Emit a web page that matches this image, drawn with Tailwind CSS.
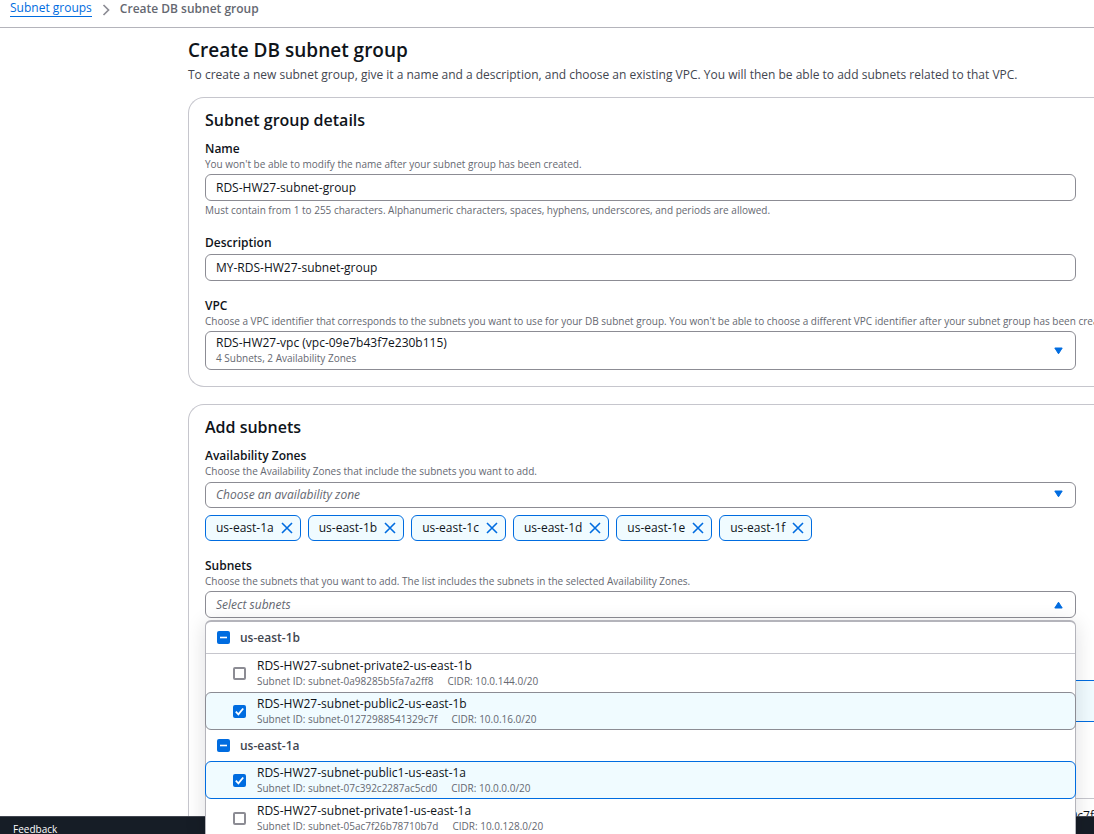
<!DOCTYPE html>
<html lang="en">
<head>
<meta charset="utf-8">
<meta name="viewport" content="width=device-width, initial-scale=1">
<title>Create DB subnet group</title>
<script src="https://cdn.jsdelivr.net/npm/@tailwindcss/browser@4"></script>
</head>
<body class="bg-white font-['Open_Sans','Noto_Sans',sans-serif] text-xs text-[#0f141a]">
<div class="relative h-screen overflow-hidden">

  <nav aria-label="Breadcrumbs" class="flex h-7 items-start gap-2 border-b border-[#b4b4bb] pl-[10px] leading-[18px]">
    <a href="#" class="leading-4 text-[#006ce0] border-b border-[#006ce0]">Subnet groups</a>
    <svg class="mt-1 size-3 text-[#8c8c94]" viewBox="0 0 12 12" fill="none" stroke="currentColor" stroke-width="1.7" aria-hidden="true"><path d="M3.5 1 8.5 6l-5 5"/></svg>
    <span class="font-semibold text-[#656871]">Create DB subnet group</span>
  </nav>

  <main class="pl-[188px] pt-[10px]">
    <h1 class="text-[19px] leading-6 font-semibold">Create DB subnet group</h1>
    <p class="mt-1 leading-[18px] text-[#424650]">To create a new subnet group, give it a name and a description, and choose an existing VPC. You will then be able to add subnets related to that VPC.</p>

    <section class="mt-[13px] rounded-l-2xl border border-r-0 border-[#c6c6cd] pt-3 pr-[18px] pb-4 pl-4">
      <h2 class="text-base leading-5 font-semibold">Subnet group details</h2>

      <div class="mt-[10px] flex flex-col">
        <label for="name" class="leading-[17px] font-semibold">Name</label>
        <p class="text-[10px] leading-[14px] text-[#656871]">You won't be able to modify the name after your subnet group has been created.</p>
        <input id="name" type="text" value="RDS-HW27-subnet-group" class="mt-[3px] h-[27px] w-full rounded-md border border-[#8c8c94] px-[10px]">
        <p class="mt-[2px] text-[10px] leading-[14px] text-[#656871]">Must contain from 1 to 255 characters. Alphanumeric characters, spaces, hyphens, underscores, and periods are allowed.</p>
      </div>

      <div class="mt-[17px] flex flex-col">
        <label for="desc" class="leading-[17px] font-semibold">Description</label>
        <input id="desc" type="text" value="MY-RDS-HW27-subnet-group" class="mt-[3px] h-[27px] w-full rounded-md border border-[#8c8c94] px-[10px]">
      </div>

      <div class="mt-4 flex flex-col">
        <label for="vpc" class="leading-[17px] font-semibold">VPC</label>
        <p class="text-[10px] leading-[14px] whitespace-nowrap text-[#656871]">Choose a VPC identifier that corresponds to the subnets you want to use for your DB subnet group. You won't be able to choose a different VPC identifier after your subnet group has been created.</p>
        <button id="vpc" type="button" aria-haspopup="listbox" class="mt-[3px] flex h-[39px] w-full items-center justify-between rounded-md border border-[#8c8c94] pr-3 pl-[10px] text-left">
          <span class="flex flex-col">
            <span class="leading-4">RDS-HW27-vpc (vpc-09e7b43f7e230b115)</span>
            <span class="text-[10px] leading-[15px] text-[#656871]">4 Subnets, 2 Availability Zones</span>
          </span>
          <svg class="h-2 w-[9px] text-[#006ce0]" viewBox="0 0 9 8" fill="currentColor" stroke="currentColor" stroke-linejoin="round" aria-hidden="true"><path d="M.8 1h7.4L4.5 6.8z"/></svg>
        </button>
      </div>
    </section>

    <section class="mt-[17px] rounded-tl-2xl border-t border-l border-[#c6c6cd] pt-3 pr-[18px] pb-24 pl-4">
      <h2 class="text-base leading-5 font-semibold">Add subnets</h2>

      <div class="mt-[10px] flex flex-col">
        <label for="az" class="leading-[17px] font-semibold">Availability Zones</label>
        <p class="text-[10px] leading-[14px] text-[#656871]">Choose the Availability Zones that include the subnets you want to add.</p>
        <div class="relative mt-1">
          <select id="az" class="block h-[26px] w-full appearance-none rounded-md border border-[#8c8c94] bg-white px-[10px] text-[#656871] italic">
            <option>Choose an availability zone</option>
          </select>
          <svg class="pointer-events-none absolute top-2 right-[13px] h-2 w-[9px] text-[#006ce0]" viewBox="0 0 9 8" fill="currentColor" stroke="currentColor" stroke-linejoin="round" aria-hidden="true"><path d="M.8 1h7.4L4.5 6.8z"/></svg>
        </div>
        <ul class="mt-[7px] flex gap-[7px]">
          <li class="flex h-[26px] items-center gap-[7px] rounded-md border border-[#006ce0] bg-[#f0fbff] pr-[7px] pl-[10px]">us-east-1a<button type="button" aria-label="Remove us-east-1a" class="text-[#006ce0]"><svg class="size-3" viewBox="0 0 12 12" fill="none" stroke="currentColor" stroke-width="1.6"><path d="m1 1 10 10M11 1 1 11"/></svg></button></li>
          <li class="flex h-[26px] items-center gap-[7px] rounded-md border border-[#006ce0] bg-[#f0fbff] pr-[7px] pl-[10px]">us-east-1b<button type="button" aria-label="Remove us-east-1b" class="text-[#006ce0]"><svg class="size-3" viewBox="0 0 12 12" fill="none" stroke="currentColor" stroke-width="1.6"><path d="m1 1 10 10M11 1 1 11"/></svg></button></li>
          <li class="flex h-[26px] items-center gap-[7px] rounded-md border border-[#006ce0] bg-[#f0fbff] pr-[7px] pl-[10px]">us-east-1c<button type="button" aria-label="Remove us-east-1c" class="text-[#006ce0]"><svg class="size-3" viewBox="0 0 12 12" fill="none" stroke="currentColor" stroke-width="1.6"><path d="m1 1 10 10M11 1 1 11"/></svg></button></li>
          <li class="flex h-[26px] items-center gap-[7px] rounded-md border border-[#006ce0] bg-[#f0fbff] pr-[7px] pl-[10px]">us-east-1d<button type="button" aria-label="Remove us-east-1d" class="text-[#006ce0]"><svg class="size-3" viewBox="0 0 12 12" fill="none" stroke="currentColor" stroke-width="1.6"><path d="m1 1 10 10M11 1 1 11"/></svg></button></li>
          <li class="flex h-[26px] items-center gap-[7px] rounded-md border border-[#006ce0] bg-[#f0fbff] pr-[7px] pl-[10px]">us-east-1e<button type="button" aria-label="Remove us-east-1e" class="text-[#006ce0]"><svg class="size-3" viewBox="0 0 12 12" fill="none" stroke="currentColor" stroke-width="1.6"><path d="m1 1 10 10M11 1 1 11"/></svg></button></li>
          <li class="flex h-[26px] items-center gap-[7px] rounded-md border border-[#006ce0] bg-[#f0fbff] pr-[7px] pl-[10px]">us-east-1f<button type="button" aria-label="Remove us-east-1f" class="text-[#006ce0]"><svg class="size-3" viewBox="0 0 12 12" fill="none" stroke="currentColor" stroke-width="1.6"><path d="m1 1 10 10M11 1 1 11"/></svg></button></li>
        </ul>
      </div>

      <div class="mt-4 flex flex-col">
        <label for="subnets" class="leading-[17px] font-semibold">Subnets</label>
        <p class="text-[10px] leading-[14px] text-[#656871]">Choose the subnets that you want to add. The list includes the subnets in the selected Availability Zones.</p>
        <div class="relative mt-[3px]">
          <button id="subnets" type="button" aria-haspopup="listbox" aria-expanded="true" class="flex h-[27px] w-full items-center justify-between rounded-md border border-[#8c8c94] pr-3 pl-[10px] text-left text-[#656871] italic">
            Select subnets
            <svg class="h-2 w-[9px] text-[#006ce0]" viewBox="0 0 9 8" fill="currentColor" stroke="currentColor" stroke-linejoin="round" aria-hidden="true"><path d="M.8 7h7.4L4.5 1.2z"/></svg>
          </button>

          <div class="absolute inset-x-0 top-[29px] z-20 rounded-t-md border border-t-2 border-[#b4b4bb] bg-white shadow-[0_4px_20px_1px_rgba(0,7,22,0.12)]">
            <label class="flex h-8 items-center gap-[10px] border-b border-[#c6c6cd] pl-[11px] font-semibold text-[#424650]">
              <span class="grid size-[13px]">
                <input type="checkbox" class="col-start-1 row-start-1 size-[13px] appearance-none rounded-xs bg-[#006ce0]">
                <svg class="pointer-events-none col-start-1 row-start-1 size-[13px]" viewBox="0 0 13 13" fill="none" stroke="#fff" stroke-width="1.6"><path d="M3 6.5h7"/></svg>
              </span>us-east-1b</label>
            <label class="flex h-[38px] items-center gap-[11px] pl-[27px]">
              <input type="checkbox" class="size-[13px] appearance-none rounded-xs border-2 border-[#8c8c94] bg-white">
              <span class="flex flex-col"><span class="leading-4">RDS-HW27-subnet-private2-us-east-1b</span><span class="flex gap-[14px] text-[10px] leading-[15px] text-[#656871]"><span>Subnet ID: subnet-0a98285b5fa7a2ff8</span><span>CIDR: 10.0.144.0/20</span></span></span>
            </label>
            <label class="-mx-px flex h-[38px] items-center gap-[11px] rounded-md border border-[#8c8c94] bg-[#f0fbff] pl-[27px]">
              <span class="grid size-[13px]">
                <input type="checkbox" checked class="col-start-1 row-start-1 size-[13px] appearance-none rounded-xs bg-[#006ce0]">
                <svg class="pointer-events-none col-start-1 row-start-1 size-[13px]" viewBox="0 0 13 13" fill="none" stroke="#fff" stroke-width="1.8"><path d="m2.8 6.6 2.6 2.7 4.8-5.8"/></svg>
              </span>
              <span class="flex flex-col"><span class="leading-4">RDS-HW27-subnet-public2-us-east-1b</span><span class="flex gap-[14px] text-[10px] leading-[15px] text-[#656871]"><span>Subnet ID: subnet-01272988541329c7f</span><span>CIDR: 10.0.16.0/20</span></span></span>
            </label>
            <label class="flex h-[31px] items-center gap-[10px] pl-[11px] font-semibold text-[#424650]">
              <span class="grid size-[13px]">
                <input type="checkbox" class="col-start-1 row-start-1 size-[13px] appearance-none rounded-xs bg-[#006ce0]">
                <svg class="pointer-events-none col-start-1 row-start-1 size-[13px]" viewBox="0 0 13 13" fill="none" stroke="#fff" stroke-width="1.6"><path d="M3 6.5h7"/></svg>
              </span>us-east-1a</label>
            <label class="-mx-px flex h-[38px] items-center gap-[11px] rounded-md border border-[#006ce0] bg-[#f0fbff] pl-[27px]">
              <span class="grid size-[13px]">
                <input type="checkbox" checked class="col-start-1 row-start-1 size-[13px] appearance-none rounded-xs bg-[#006ce0]">
                <svg class="pointer-events-none col-start-1 row-start-1 size-[13px]" viewBox="0 0 13 13" fill="none" stroke="#fff" stroke-width="1.8"><path d="m2.8 6.6 2.6 2.7 4.8-5.8"/></svg>
              </span>
              <span class="flex flex-col"><span class="leading-4">RDS-HW27-subnet-public1-us-east-1a</span><span class="flex gap-[14px] text-[10px] leading-[15px] text-[#656871]"><span>Subnet ID: subnet-07c392c2287ac5cd0</span><span>CIDR: 10.0.0.0/20</span></span></span>
            </label>
            <label class="flex h-[38px] items-center gap-[11px] pl-[27px]">
              <input type="checkbox" class="size-[13px] appearance-none rounded-xs border-2 border-[#8c8c94] bg-white">
              <span class="flex flex-col"><span class="leading-4">RDS-HW27-subnet-private1-us-east-1a</span><span class="flex gap-[14px] text-[10px] leading-[15px] text-[#656871]"><span>Subnet ID: subnet-05ac7f26b78710b7d</span><span>CIDR: 10.0.128.0/20</span></span></span>
            </label>
          </div>
        </div>
      </div>

      <div class="mt-[62px] -mr-[18px] h-[42px] border-y border-[#006ce0] bg-[#f0fbff]"></div>
      <div class="mt-[76px] -mr-[18px] flex justify-end border-t border-[#c6c6cd] pt-2 leading-[18px]">01272988541329c7f</div>
    </section>
  </main>

  <footer class="absolute inset-x-0 bottom-0 z-10 h-[18px] border-t border-[#424650] bg-[#161d26] pt-[5px] pl-[13px] text-[10px] leading-[14px] text-white">
    <a href="#">Feedback</a>
  </footer>
</div>
</body>
</html>
